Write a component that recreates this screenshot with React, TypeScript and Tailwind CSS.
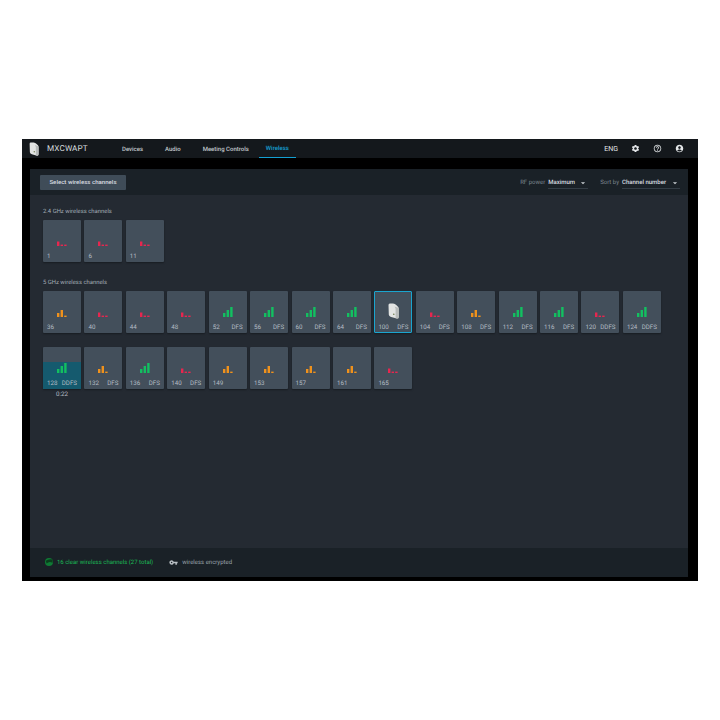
import { MdSettings, MdHelpOutline, MdAccountCircle, MdArrowDropDown, MdVpnKey } from 'react-icons/md';

type Level = 'red' | 'orange' | 'green';

interface Channel {
  num: number;
  tag?: string;
  level: Level;
  active?: boolean;
  timer?: string;
}

const low: Channel[] = [
  { num: 1, level: 'red' },
  { num: 6, level: 'red' },
  { num: 11, level: 'red' },
];

const highTop: Channel[] = [
  { num: 36, level: 'orange' },
  { num: 40, level: 'red' },
  { num: 44, level: 'red' },
  { num: 48, level: 'red' },
  { num: 52, tag: 'DFS', level: 'green' },
  { num: 56, tag: 'DFS', level: 'green' },
  { num: 60, tag: 'DFS', level: 'green' },
  { num: 64, tag: 'DFS', level: 'green' },
  { num: 100, tag: 'DFS', level: 'green', active: true },
  { num: 104, tag: 'DFS', level: 'red' },
  { num: 108, tag: 'DFS', level: 'orange' },
  { num: 112, tag: 'DFS', level: 'green' },
  { num: 116, tag: 'DFS', level: 'green' },
  { num: 120, tag: 'DDFS', level: 'red' },
  { num: 124, tag: 'DDFS', level: 'green' },
];

const highBottom: Channel[] = [
  { num: 128, tag: 'DDFS', level: 'green', timer: '0:22' },
  { num: 132, tag: 'DFS', level: 'orange' },
  { num: 136, tag: 'DFS', level: 'green' },
  { num: 140, tag: 'DFS', level: 'red' },
  { num: 149, level: 'orange' },
  { num: 153, level: 'orange' },
  { num: 157, level: 'orange' },
  { num: 161, level: 'orange' },
  { num: 165, level: 'red' },
];

// signal strength drawing, three bars
function SignalBars({ level }: { level: Level }) {
  if (level === 'green') {
    return (
      <svg width="10" height="10" viewBox="0 0 10 10">
        <rect x="0" y="6" width="2.4" height="4" fill="#12c060" />
        <rect x="3.6" y="3" width="2.4" height="7" fill="#12c060" />
        <rect x="7.2" y="0" width="2.4" height="10" fill="#12c060" />
      </svg>
    );
  }
  if (level === 'orange') {
    return (
      <svg width="10" height="7" viewBox="0 0 10 7">
        <rect x="0" y="3" width="2.4" height="4" fill="#f0921c" />
        <rect x="3.6" y="0" width="2.4" height="7" fill="#f0921c" />
        <rect x="7.2" y="5.6" width="2.4" height="1.4" fill="#f0921c" />
      </svg>
    );
  }
  return (
    <svg width="10" height="5" viewBox="0 0 10 5">
      <rect x="0" y="0.5" width="2.4" height="4.5" fill="#e8264f" />
      <rect x="3.6" y="3.6" width="2.4" height="1.4" fill="#e8264f" />
      <rect x="7.2" y="3.6" width="2.4" height="1.4" fill="#e8264f" />
    </svg>
  );
}

function DeviceIcon({ w, h }: { w: number; h: number }) {
  return (
    <svg width={w} height={h} viewBox="0 0 11 16">
      <path d="M0.5 2 Q0.5 0.4 2 0.5 L5 0.6 Q7 0.8 8.5 2.2 L10 3.8 Q10.7 4.5 10.7 5.6 L10.7 14 Q10.7 15.8 9 15.6 L3 14 Q1 13.4 0.8 11.8 Z" fill="#e2e4e3" />
      <path d="M6.6 3.4 L10.7 5 L10.7 14 Q10.7 15.8 9 15.6 L7.6 15.2 L7.6 5.6 Z" fill="#b7bbba" />
      <circle cx="5.8" cy="11.2" r="0.8" fill="#6c7a4c" />
    </svg>
  );
}

function ChannelTile({ channel }: { channel: Channel }) {
  const { num, tag, level, active, timer } = channel;
  return (
    <div className="w-[38px] shrink-0">
      <div
        className={`relative h-[42px] rounded-[1px] shadow-[0_1px_2px_rgba(0,0,0,0.35)] bg-[#434f5b] ${
          active ? 'border border-[#1aa5cf]' : ''
        }`}
      >
        {timer && <div className="absolute left-0 right-0 bottom-0 h-[27px] bg-[#155a6e]" />}
        {active ? (
          <div className="relative flex justify-center pt-[11px] h-[28px]">
            <DeviceIcon w={11} h={16} />
          </div>
        ) : (
          <div className="relative flex items-end justify-center h-[26px]">
            <SignalBars level={level} />
          </div>
        )}
        <div
          className={`relative flex justify-between text-[6.2px] leading-[9px] text-[#b4bcc4] ${
            active ? 'px-[3px] mt-[3px]' : 'px-[4px] mt-[6px]'
          }`}
        >
          <span>{num}</span>
          {tag && <span>{tag}</span>}
        </div>
      </div>
      {timer && <div className="text-center text-[6.2px] leading-[9px] mt-[1px] text-[#b4bcc4]">{timer}</div>}
    </div>
  );
}

function TileRow({ items }: { items: Channel[] }) {
  return (
    <div className="flex gap-[3.43px]">
      {items.map((c) => (
        <ChannelTile key={c.num} channel={c} />
      ))}
    </div>
  );
}

export default function App() {
  return (
    <div className="w-[720px] h-[720px] bg-white flex items-center justify-center font-['Roboto',sans-serif] [text-rendering:geometricPrecision]">
      <div className="w-[676px] h-[442px] bg-black flex flex-col">
        {/* Top nav */}
        <div className="h-[19px] bg-[#14181c] flex items-center text-[#d5d9dc] shrink-0">
          <div className="ml-[7px] w-[10px] flex">
            <DeviceIcon w={10} h={14} />
          </div>
          <span className="ml-[8px] pt-[1px] text-[8.2px] w-[68px] tracking-[0.1px]">MXCWAPT</span>
          <nav className="flex h-full text-[6px] font-medium text-[#c3c9ce]">
            <a className="px-[7px] pt-[1px] flex items-center">Devices</a>
            <a className="px-[7px] pt-[1px] ml-[8px] flex items-center">Audio</a>
            <a className="px-[7px] pt-[1px] ml-[8px] flex items-center">Meeting Controls</a>
            <a className="px-[7px] pt-[1px] ml-[3px] flex items-center text-[#14a0d2] border-b border-[#14a0d2]">Wireless</a>
          </nav>
          <div className="ml-auto flex items-center mr-[14px] text-[#e4e7e9]">
            <span className="text-[7px] pt-[1px] mr-[13px]">ENG</span>
            <MdSettings className="w-[9px] h-[9px] mr-[13px]" />
            <MdHelpOutline className="w-[9px] h-[9px] mr-[13px]" />
            <MdAccountCircle className="w-[9px] h-[9px]" />
          </div>
        </div>

        {/* Main panel */}
        <div className="flex-1 min-h-0 pt-[11px] pl-[8px] pr-[10px] pb-[4px]">
          <div className="h-full bg-[#242a32] flex flex-col">
            <div className="h-[26px] bg-[#1a2127] flex items-center pl-[10px] pr-[8px] shrink-0">
              <button className="h-[15px] w-[86px] bg-[#3f4c58] rounded-[1px] text-[6.1px] font-medium text-[#d9dde0]">
                Select wireless channels
              </button>
              <div className="ml-auto flex items-center text-[6px] text-[#7c868f]">
                <span>RF power</span>
                <span className="ml-[3px] w-[40px] flex justify-between items-center text-[#d9dde0] font-medium border-b border-[#343d45] h-[13px] pt-[2px]">
                  Maximum
                  <MdArrowDropDown className="w-[10px] h-[10px] text-[#c9ced2]" />
                </span>
                <span className="ml-[12px]">Sort by</span>
                <span className="ml-[3px] w-[58px] flex justify-between items-center text-[#d9dde0] font-medium border-b border-[#343d45] h-[13px] pt-[2px]">
                  Channel number
                  <MdArrowDropDown className="w-[10px] h-[10px] text-[#c9ced2]" />
                </span>
              </div>
            </div>

            <div className="flex-1 min-h-0 pl-[13px]">
              <div className="mt-[13px] h-[12px] text-[5.9px] leading-[9px] text-[#a3adb5]">2.4 GHz wireless channels</div>
              <TileRow items={low} />
              <div className="mt-[17px] h-[12px] text-[5.9px] leading-[9px] text-[#a3adb5]">5 GHz wireless channels</div>
              <TileRow items={highTop} />
              <div className="mt-[14px]">
                <TileRow items={highBottom} />
              </div>
            </div>

            <div className="h-[29px] bg-[#1a2127] flex items-center pl-[15px] pb-[1px] text-[6px] shrink-0">
              <svg width="8" height="8" viewBox="0 0 10 10">
                <circle cx="5" cy="5" r="5" fill="#0f7a34" />
                <path d="M1 3.5 Q5 0.5 9.5 2 L9.5 6 Q5 3.5 2 7 Z" fill="#0a3d1c" />
              </svg>
              <span className="ml-[4px] text-[#1ab856]">16 clear wireless channels (27 total)</span>
              <MdVpnKey className="ml-[16px] w-[9px] h-[9px] text-[#b9bfc4]" />
              <span className="ml-[4px] text-[#9aa3ab]">wireless encrypted</span>
            </div>
          </div>
        </div>
      </div>
    </div>
  );
}
